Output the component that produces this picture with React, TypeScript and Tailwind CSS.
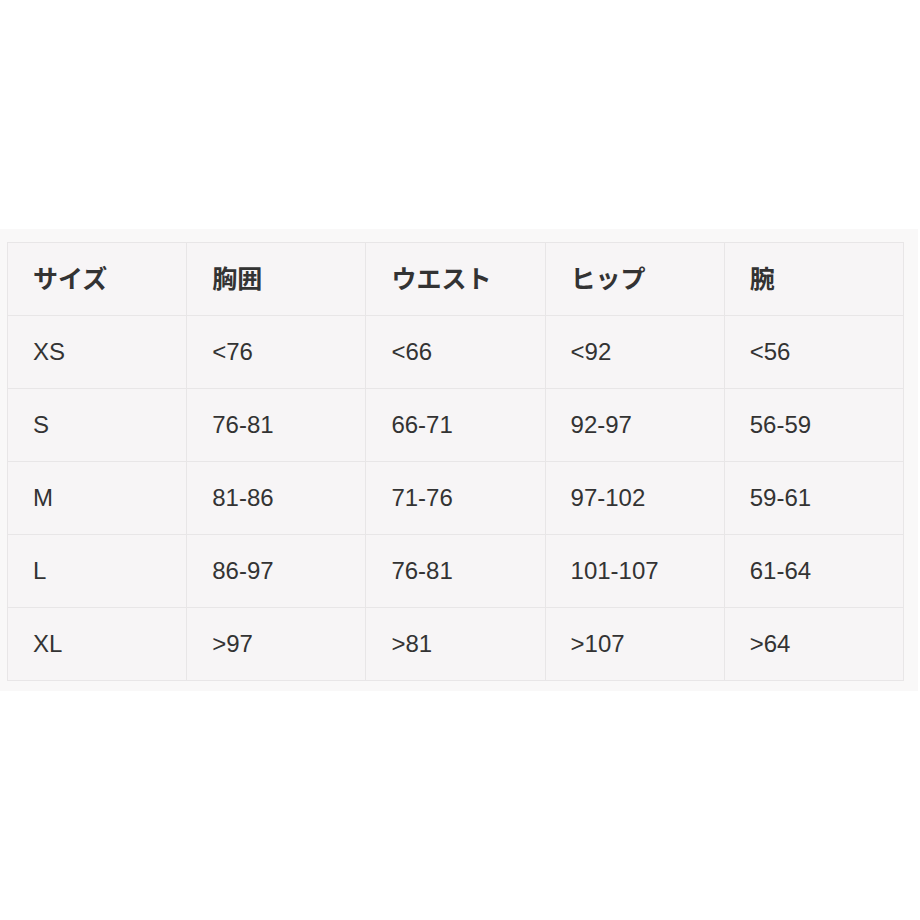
import React from "react";

const headers = ["サイズ", "胸囲", "ウエスト", "ヒップ", "腕"];
const rows = [
  ["XS", "<76", "<66", "<92", "<56"],
  ["S", "76-81", "66-71", "92-97", "56-59"],
  ["M", "81-86", "71-76", "97-102", "59-61"],
  ["L", "86-97", "76-81", "101-107", "61-64"],
  ["XL", ">97", ">81", ">107", ">64"],
];

export default function App() {
  return (
    <div className="w-[920px] h-[920px] bg-white pt-[229px]">
      <div className="w-[918px] bg-[#f9f8f8] pt-[13px] pl-[7px] pr-[14px] pb-[10px]">
        <table
          className="w-[897px] border-collapse bg-[#f7f5f6] text-[#333333] table-fixed"
          style={{ fontFamily: '"Liberation Sans", "Noto Sans CJK JP", sans-serif' }}
        >
          <thead>
            <tr>
              {headers.map((h) => (
                <th
                  key={h}
                  className="h-[73px] border border-[#e8e6e7] pl-[25px] pb-[3px] text-left align-middle text-[25px] font-bold"
                  style={{ fontFamily: '"Noto Sans CJK JP", sans-serif' }}
                >
                  {h}
                </th>
              ))}
            </tr>
          </thead>
          <tbody>
            {rows.map((r) => (
              <tr key={r[0]}>
                {r.map((c, i) => (
                  <td
                    key={i}
                    className="h-[73px] border border-[#e8e6e7] pl-[25px] text-left align-middle text-[24px] font-normal"
                  >
                    {c}
                  </td>
                ))}
              </tr>
            ))}
          </tbody>
        </table>
      </div>
    </div>
  );
}
